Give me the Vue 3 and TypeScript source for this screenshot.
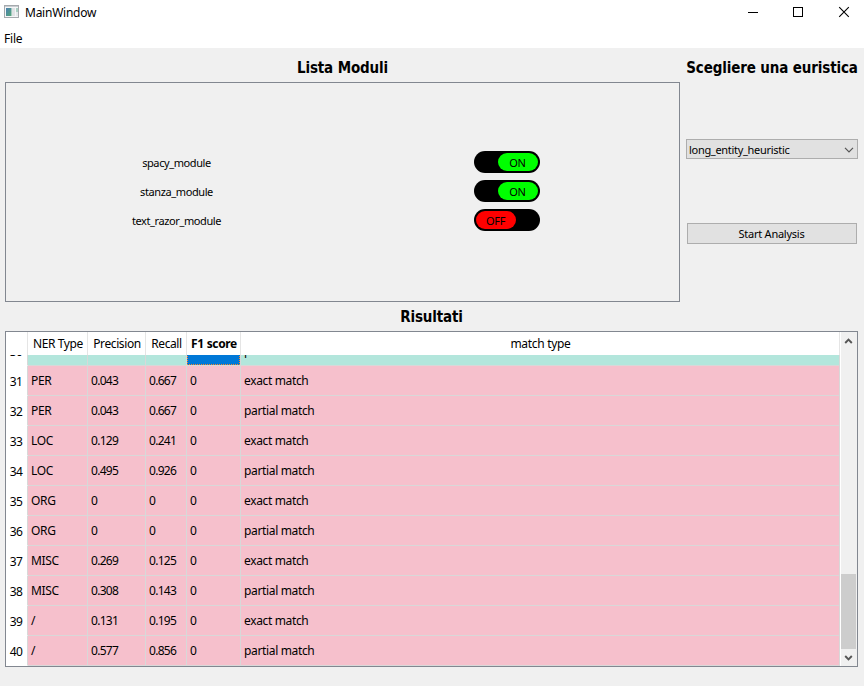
<script setup lang="ts">
import { ref } from 'vue'

interface Module {
  name: string
  on: boolean
}

interface Row {
  n: number
  type: string
  precision: string
  recall: string
  f1: string
  match: string
}

const modules = ref<Module[]>([
  { name: 'spacy_module', on: true },
  { name: 'stanza_module', on: true },
  { name: 'text_razor_module', on: false },
])

const make = (n: number, type: string, precision: string, recall: string): Row => ({
  n,
  type,
  precision,
  recall,
  f1: '0',
  match: n % 2 ? 'exact match' : 'partial match',
})

const rows: Row[] = [
  make(31, 'PER', '0.043', '0.667'),
  make(32, 'PER', '0.043', '0.667'),
  make(33, 'LOC', '0.129', '0.241'),
  make(34, 'LOC', '0.495', '0.926'),
  make(35, 'ORG', '0', '0'),
  make(36, 'ORG', '0', '0'),
  make(37, 'MISC', '0.269', '0.125'),
  make(38, 'MISC', '0.308', '0.143'),
  make(39, '/', '0.131', '0.195'),
  make(40, '/', '0.577', '0.856'),
]
</script>

<template>
  <div class="window">
    <header class="titlebar">
      <svg class="app-icon" width="16" height="14" viewBox="0 0 16 14">
        <defs>
          <linearGradient id="pane" x1="0" y1="0" x2="1" y2="1">
            <stop offset="0" stop-color="#4a7fb0" />
            <stop offset="1" stop-color="#55a878" />
          </linearGradient>
        </defs>
        <rect x="0.5" y="0.5" width="14" height="12" fill="#f5f6f7" stroke="#a5a9ad" />
        <rect x="1" y="1" width="13" height="1" fill="#c9cdd1" />
        <rect x="2" y="3" width="5.5" height="8" fill="url(#pane)" />
        <rect x="8" y="3" width="3" height="8" fill="#dfe2e4" />
        <rect x="12" y="3" width="2" height="4" fill="#a9cfc2" />
        <rect x="12" y="7" width="2" height="4" fill="#e4e8ea" />
      </svg>
      <span class="title">MainWindow</span>
      <div class="controls">
        <svg width="46" height="24" viewBox="0 0 46 24" shape-rendering="crispEdges">
          <path d="M18 12.5H28" stroke="#000" />
        </svg>
        <svg width="46" height="24" viewBox="0 0 46 24" shape-rendering="crispEdges">
          <rect x="17.5" y="7.5" width="9" height="9" fill="none" stroke="#000" />
        </svg>
        <svg width="46" height="24" viewBox="0 0 46 24">
          <path d="M17.2 7.2L26.8 16.8M26.8 7.2L17.2 16.8" stroke="#000" stroke-width="1.1" />
        </svg>
      </div>
    </header>
    <nav class="menubar"><span class="file">File</span></nav>

    <main>
      <div class="top">
        <section class="left">
          <h2>Lista Moduli</h2>
          <div class="modules">
            <div v-for="m in modules" :key="m.name" class="module">
              <span class="name">{{ m.name }}</span>
              <div class="slot">
                <button class="switch" :class="{ on: m.on }" @click="m.on = !m.on">
                  <span class="thumb">{{ m.on ? 'ON' : 'OFF' }}</span>
                </button>
              </div>
            </div>
          </div>
        </section>
        <section class="right">
          <h2>Scegliere una euristica</h2>
          <div class="combo">
            <span>long_entity_heuristic</span>
            <svg width="10" height="6" viewBox="0 0 10 6">
              <path d="M1 0.8L5 4.8L9 0.8" fill="none" stroke="#555" stroke-width="1.2" />
            </svg>
          </div>
          <button class="start">Start Analysis</button>
        </section>
      </div>

      <h2 class="results-title">Risultati</h2>
      <div class="results">
        <div class="grid">
          <div class="row head">
            <span class="num"></span>
            <span>NER Type</span>
            <span>Precision</span>
            <span>Recall</span>
            <span class="current">F1 score</span>
            <span class="wide">match type</span>
          </div>
          <div class="clip">
            <div class="row data teal">
              <span class="num">30</span>
              <span>/</span>
              <span></span>
              <span></span>
              <span class="selected"><i></i></span>
              <span class="match">partial match</span>
            </div>
          </div>
          <div v-for="r in rows" :key="r.n" class="row data">
            <span class="num">{{ r.n }}</span>
            <span class="type">{{ r.type }}</span>
            <span class="value">{{ r.precision }}</span>
            <span class="value">{{ r.recall }}</span>
            <span>{{ r.f1 }}</span>
            <span class="match">{{ r.match }}</span>
          </div>
        </div>
        <div class="scrollbar">
          <svg width="15" height="17" viewBox="0 0 15 17">
            <path d="M4.2 11L7.5 7.7L10.8 11" fill="none" stroke="#555" stroke-width="1.9" />
          </svg>
          <div class="track"><div class="handle"></div></div>
          <svg width="15" height="17" viewBox="0 0 15 17">
            <path d="M4.2 7L7.5 10.3L10.8 7" fill="none" stroke="#555" stroke-width="1.9" />
          </svg>
        </div>
      </div>
    </main>
  </div>
</template>

<style>
body {
  background: #f0f0f0;
}
</style>

<style scoped>
* {
  box-sizing: border-box;
}
.window {
  width: 864px;
  height: 686px;
  background: #f0f0f0;
  color: #000;
  font: 12px/16px 'Noto Sans', 'Open Sans', sans-serif;
  display: flex;
  flex-direction: column;
  overflow: hidden;
}
.titlebar {
  height: 30px;
  background: #fff;
  display: flex;
  align-items: flex-start;
  padding-left: 4px;
}
.app-icon {
  margin-top: 5px;
}
.title {
  margin: 5px 0 0 5px;
  letter-spacing: -0.25px;
}
.controls {
  margin-left: auto;
  display: flex;
  margin-right: -4px;
}
.menubar {
  height: 18px;
  background: #fff;
  padding: 1px 0 0 4px;
  letter-spacing: -0.2px;
}
main {
  flex: 1;
  padding: 0 6px 0 5px;
}
h2 {
  margin: 0;
  height: 34px;
  padding-top: 10px;
  font: bold 15px/20px 'DejaVu Sans Condensed', 'DejaVu Sans', sans-serif;
  font-stretch: condensed;
  letter-spacing: -0.14px;
  display: flex;
  justify-content: center;
  white-space: nowrap;
}
.top {
  display: flex;
  gap: 6px;
  height: 254px;
}
.left {
  width: 675px;
}
.right {
  width: 172px;
}
.modules {
  height: 220px;
  border: 1px solid #828790;
  padding-top: 65px;
  display: flex;
  flex-direction: column;
  font-size: 11px;
}
.module {
  display: flex;
  height: 29px;
  align-items: center;
}
.name {
  width: 341px;
  text-align: center;
  letter-spacing: -0.4px;
}
.slot {
  flex: 1;
  padding: 0 0 1px 127px;
  display: flex;
}
.switch {
  width: 66px;
  height: 22px;
  padding: 2px;
  border: 0;
  border-radius: 11px;
  background: #000;
  display: flex;
}
.switch.on {
  justify-content: flex-end;
}
.thumb {
  width: 40px;
  height: 18px;
  border-radius: 9px;
  background: #f00;
  color: #000;
  font: 11px/20px 'Noto Sans', sans-serif;
  letter-spacing: -0.3px;
  text-align: center;
  padding-right: 1px;
}
.on .thumb {
  background: #0f0;
}
.combo {
  margin-top: 57px;
  height: 20px;
  border: 1px solid #adadad;
  background: #e1e1e1;
  display: flex;
  align-items: center;
  justify-content: space-between;
  padding: 1px 3px 0 2px;
  font-size: 11px;
  letter-spacing: -0.3px;
}
.start {
  display: block;
  margin: 64px 1px 0;
  width: 170px;
  height: 21px;
  border: 1px solid #adadad;
  background: #e1e1e1;
  color: #000;
  padding: 1px 1px 0 0;
  font: 11px/16px 'Noto Sans', sans-serif;
  letter-spacing: -0.25px;
}
.results-title {
  height: 29px;
  padding-top: 5px;
}
.results {
  height: 336px;
  border: 1px solid #828790;
  background: #fff;
  display: flex;
}
.grid {
  width: 835px;
}
.row {
  display: grid;
  grid-template-columns: 22px 60px 58px 41px 54px 599px;
}
.row > span {
  border-right: 1px solid #d8d8d8;
  white-space: nowrap;
  overflow: hidden;
}
.head {
  height: 23px;
  line-height: 24px;
  text-align: center;
  letter-spacing: -0.4px;
}
.head > span {
  border-color: #e5e5e5;
  padding-left: 1px;
}
.head .current {
  font-weight: bold;
  letter-spacing: -0.35px;
}
.head .wide {
  letter-spacing: -0.3px;
}
.data {
  height: 30px;
}
.data > span {
  background: #f6c0cc;
  border-bottom: 1px solid #d8d8d8;
  padding-left: 3px;
  line-height: 29px;
}
.data > .num {
  background: #fff;
  border-bottom-color: #fff;
  padding: 0 1px 0 0;
  text-align: center;
  line-height: 31px;
  letter-spacing: -0.5px;
}
.data > .type {
  letter-spacing: -0.35px;
}
.data > .value {
  letter-spacing: -0.7px;
}
.data > .match {
  letter-spacing: -0.35px;
}
.clip {
  height: 11px;
  overflow: hidden;
  display: flex;
  flex-direction: column;
  justify-content: flex-end;
}
.clip .row {
  flex: none;
}
.teal > span:not(.num) {
  background: #b3e6dc;
}
.teal > span.selected:not(.num) {
  background: #0078d7;
  padding: 0;
}
.selected i {
  display: block;
  height: 29px;
  border: 1px dotted #ff8728;
}
.scrollbar {
  width: 15px;
  margin-left: auto;
  background: #f0f0f0;
  box-shadow: 1px 0 #f0f0f0;
  margin-right: 1px;
  display: flex;
  flex-direction: column;
}
.track {
  flex: 1;
  display: flex;
  flex-direction: column;
  justify-content: flex-end;
}
.handle {
  height: 75px;
  background: #cdcdcd;
}
</style>
